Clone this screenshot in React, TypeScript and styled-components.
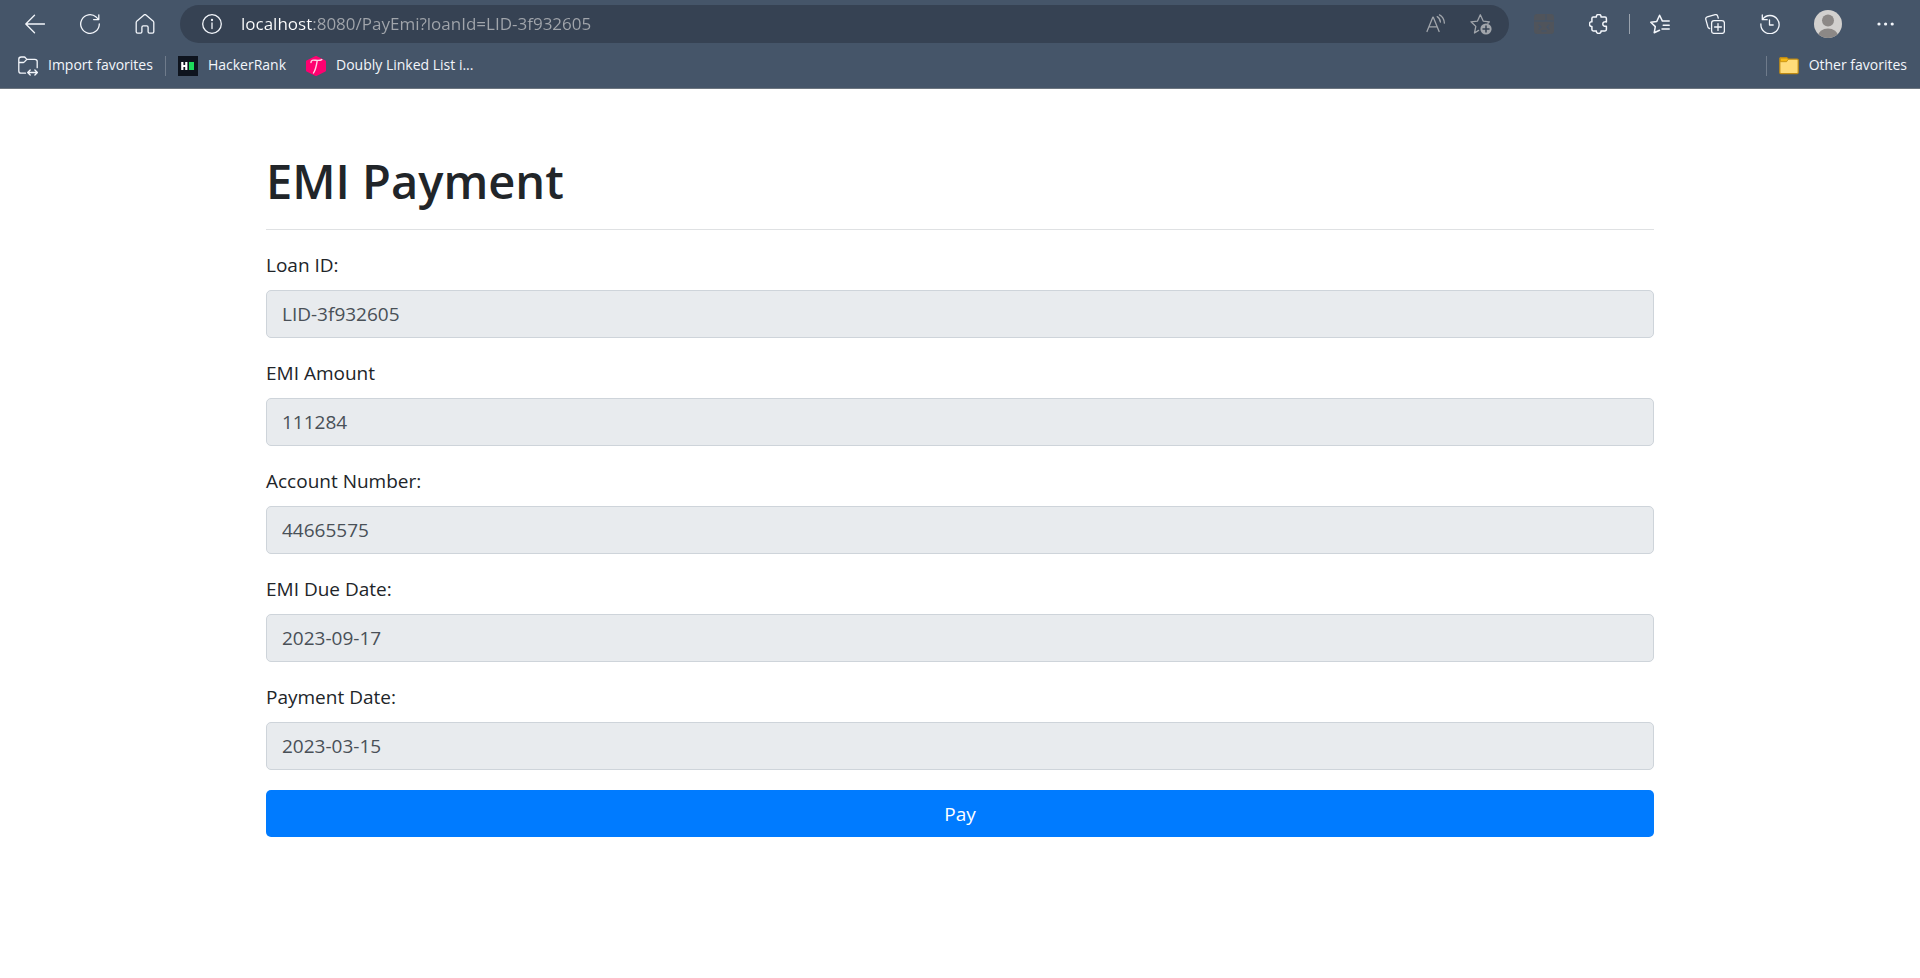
import React from 'react';
import styled, { createGlobalStyle } from 'styled-components';

const GlobalStyle = createGlobalStyle`
  *, *::before, *::after { box-sizing: border-box; }
  body {
    margin: 0;
    background: #ffffff;
    color: #212529;
    font-family: "Segoe UI", "Open Sans", "Noto Sans", sans-serif;
    font-size: 19px;
    line-height: 30px;
  }
  button, input { font-family: inherit; margin: 0; }
`;

const BrowserHeader = styled.header`
  background: #455569;
  border-bottom: 1px solid #6c757f;
  color: #f3f6fb;
`;

const Toolbar = styled.div`
  display: flex;
  align-items: center;
  gap: 15px;
  height: 48px;
  padding: 0 14px 0 15px;
`;

const ToolButton = styled.button<{ $wide?: boolean }>`
  display: flex;
  align-items: center;
  justify-content: center;
  flex: none;
  width: ${(p) => (p.$wide ? 46 : 40)}px;
  height: 36px;
  padding: 0;
  border: 0;
  background: transparent;
  color: inherit;
`;

const ToolGroup = styled.div`
  display: flex;
  align-items: center;
  gap: 15px;
`;

const Divider = styled.span<{ $spaced?: boolean }>`
  flex: none;
  width: 1px;
  height: 20px;
  margin: ${(p) => (p.$spaced ? '0 -5px' : '0')};
  background: ${(p) => (p.$spaced ? '#9aa3ae' : '#6f7b8b')};
`;

const AddressBar = styled.div`
  display: flex;
  align-items: center;
  flex: 1;
  height: 38px;
  padding: 0 8px 0 12px;
  border-radius: 19px;
  background: #364253;
`;

const AddressInput = styled.input`
  flex: 1;
  min-width: 0;
  height: 30px;
  padding: 0 0 2px;
  margin-left: 9px;
  border: 0;
  outline: 0;
  font-size: 17px;
  line-height: 24px;
  color: #ffffff;
  background: linear-gradient(90deg, #ffffff 72px, #a1a5ab 72px);
  background-clip: text;
  -webkit-text-fill-color: transparent;
`;

const AddressActions = styled.div`
  display: flex;
  align-items: center;
  gap: 5px;
  color: #a1a5ab;
`;

const FavoritesBar = styled.nav`
  display: flex;
  align-items: center;
  height: 40px;
  padding: 0 13px 4px 18px;
  gap: 12px;
`;

const Favorite = styled.a`
  display: flex;
  align-items: center;
  gap: 10px;
  margin-right: 8px;
  color: inherit;
  font-size: 14px;
  line-height: 20px;
  text-decoration: none;
  white-space: nowrap;
  &:first-child, &:last-child { margin-right: 0; }
`;

const FavoriteText = styled.span`
  padding-bottom: 2px;
`;

const Spacer = styled.span`
  flex: 1;
`;

const Page = styled.main`
  width: 100%;
  max-width: 1426px;
  margin: 0 auto;
  padding: 62px 19px;
`;

const Title = styled.h1`
  margin: 0;
  font-size: 47px;
  line-height: 60px;
  font-weight: 600;
`;

const Rule = styled.hr`
  margin: 18px 0 20px;
  border: 0;
  border-top: 1px solid #dfe1e3;
`;

const Form = styled.form`
  display: flex;
  flex-direction: column;
  gap: 20px;
`;

const Field = styled.div`
  display: flex;
  flex-direction: column;
  gap: 10px;
`;

const Label = styled.label`
  line-height: 30px;
`;

const TextInput = styled.input`
  width: 100%;
  height: 48px;
  padding: 8px 15px;
  border: 1px solid #ced4da;
  border-radius: 5px;
  background: #e8ebee;
  color: #495057;
  font-size: 19px;
  line-height: 30px;
  outline: 0;
`;

const PayButton = styled.button`
  height: 47px;
  border: 0;
  border-radius: 5px;
  background: #007bff;
  color: #ffffff;
  font-size: 19px;
  line-height: 30px;
`;

const Icon = ({ children, size = 20, width = 1.3 }: { children: React.ReactNode; size?: number; width?: number }) => (
  <svg
    width={size}
    height={size}
    viewBox={`0 0 ${size} ${size}`}
    fill="none"
    stroke="currentColor"
    strokeWidth={width}
    strokeLinecap="round"
    strokeLinejoin="round"
    aria-hidden="true"
  >
    {children}
  </svg>
);

const BackIcon = () => <Icon><path d="M9.5 1.3 .8 10l8.7 8.7M1 10h18.6" /></Icon>;
const ReloadIcon = () => <Icon><path d="M19.3 10A9.3 9.3 0 1 1 16.2 3.1L18.6 5.4M18.8.8v4.8H13.6" /></Icon>;
const HomeIcon = () => (
  <Icon>
    <path d="M1.2 8.6c0-.7.3-1.2.8-1.7L9 .9c.6-.5 1.4-.5 2 0l7 6c.5.5.8 1 .8 1.7v9.2c0 .9-.5 1.4-1.4 1.4h-2.9c-.9 0-1.4-.5-1.4-1.4v-4.5c0-.9-.5-1.4-1.4-1.4H8.3c-.9 0-1.4.5-1.4 1.4v4.5c0 .9-.5 1.4-1.4 1.4H2.600c-.9 0-1.400-.5-1.400-1.400z" />
  </Icon>
);
const InfoIcon = () => (
  <Icon>
    <circle cx="10" cy="10" r="9.3" />
    <path d="M10 9v5.500" />
    <circle cx="10" cy="6" r=".5" fill="currentColor" />
  </Icon>
);
const ReadAloudIcon = () => (
  <Icon>
    <path d="M1 17.500 6.800 3.200h.5l5.800 14.300M3 12.800h8.200M11.200 2.600c2 1.200 3 3 3.200 5.400M13.500.9c2.900 1.600 4.600 4.200 4.900 8.200" />
  </Icon>
);
const AddFavoriteIcon = () => (
  <Icon size={22}>
    <path d="M8.600 17.400 4.500 20l1.300-6.600L1 8.800l6.500-.7L10.300 1.800l2.900 6.300 6.200.7-1.500 1.500" />
    <circle cx="16" cy="16" r="5.600" fill="currentColor" stroke="none" />
    <path d="M16 13v6M13 16h6" stroke="#364253" strokeWidth="1.500" />
  </Icon>
);
const ExtensionIcon = () => (
  <Icon>
    <rect x="0" y="0" width="20" height="20" rx="3" fill="#50545b" stroke="none" />
    <path d="M1 7h11M12 1v6h7M5 11l2 2-2 2M15 11l-2 2 2 2M8 17h4" stroke="#465467" />
  </Icon>
);
const PuzzleIcon = () => (
  <Icon width={1.5}>
    <path d="M4.300 3h3.100c-.2-1.600.8-2.600 2.300-2.600S12.200 1.400 12 3h4c.9 0 1.400.5 1.400 1.400v3.500c-2.300-.4-3.600.5-3.600 2.200s1.300 2.500 3.600 2.200v3.300c0 .9-.5 1.400-1.400 1.400H12c.2 1.600-.8 2.500-2.300 2.500S7.200 18.600 7.400 17H4.300c-.9 0-1.400-.5-1.400-1.400v-3.200C1.300 12.600.5 11.600.5 10.100s.8-2.500 2.400-2.300V4.400C2.900 3.500 3.400 3 4.300 3z" />
  </Icon>
);
const FavoritesIcon = () => (
  <Icon width={1.5}>
    <path d="M9.500 16.300 4.200 18.800l1.100-6.200L.8 8.200l6-.8L9.600 1.200l2.800 5.900h6.800M13.200 11.200h6M12 15h7.200" />
  </Icon>
);
const CollectionsIcon = () => (
  <Icon>
    <rect x="6.600" y="6.600" width="12.800" height="12.800" rx="2.500" />
    <path d="M13 9.600v6.800M9.600 13h6.800M4.600 14.500c-1-.2-1.500-.8-1.800-1.800L.8 5.300C.5 4 1 3.200 2.200 2.800l8-2.100c1.300-.3 2.100.2 2.500 1.400l.6 2.100" />
  </Icon>
);
const HistoryIcon = () => (
  <Icon>
    <path d="M2.300 1v4.700h4.900M2.500 5.400A9.100 9.100 0 1 1 .9 10M9.500 5.800V11h3.700" />
  </Icon>
);
const AvatarIcon = () => (
  <svg width="28" height="28" viewBox="0 0 28 28" aria-hidden="true">
    <defs>
      <clipPath id="avatarClip"><circle cx="14" cy="14" r="14" /></clipPath>
    </defs>
    <g clipPath="url(#avatarClip)">
      <rect width="28" height="28" fill="#d2d0ce" />
      <circle cx="14" cy="10.500" r="6" fill="#8c8886" />
      <ellipse cx="14" cy="26" rx="10" ry="7.500" fill="#8c8886" />
    </g>
  </svg>
);
const MoreIcon = () => (
  <Icon>
    <g fill="currentColor" stroke="none">
      <circle cx="3" cy="10" r="1.600" /><circle cx="9.600" cy="10" r="1.600" /><circle cx="16.200" cy="10" r="1.600" />
    </g>
  </Icon>
);
const ImportIcon = () => (
  <Icon>
    <path d="M7.500 17.200H3.200C1.700 17.200.8 16.400.8 15V3.200C.8 1.800 1.700 1 3.200 1h3c1.400 0 1.700 2.300 3.200 2.300h7.400c1.500 0 2.400.8 2.400 2.200v6.200M.8 6.500h4.700c1.600 0 2.200-3.200 4-3.200M9.800 16.500h9.500M12.200 14l-2.500 2.500 2.500 2.500M16.900 14l2.500 2.500-2.500 2.500" />
  </Icon>
);
const HackerRankIcon = () => (
  <svg width="20" height="20" viewBox="0 0 20 20" aria-hidden="true">
    <rect width="20" height="20" fill="#0e141e" />
    <path d="M4.300 6v8M8.300 6v8M4.300 10h4" stroke="#fff" strokeWidth="2.200" />
    <rect x="11" y="6" width="5" height="8" fill="#1ddb5b" />
  </svg>
);
const TutorialIcon = () => (
  <svg width="20" height="20" viewBox="0 0 20 20" aria-hidden="true">
    <path d="M10 1 19 5.500v9L10 19 1 14.500v-9z" fill="#ff0070" stroke="#ff0070" strokeWidth="2" strokeLinejoin="round" />
    <path d="M5 6.500C5 4 7 4 9 4.200s5 .6 6.800-.6M11.200 4.500C10.500 9 10 13 7.500 17" fill="none" stroke="#ffd5e6" strokeWidth="1.400" strokeLinecap="round" />
  </svg>
);
const FolderIcon = () => (
  <svg width="20" height="20" viewBox="0 0 20 20" aria-hidden="true">
    <path d="M.8 2.500c0-.6.400-1 1-1h5.600c.8 0 1.300 1.300 2.100 1.600h8.700c.6 0 1 .4 1 1v12.500c0 .6-.4 1-1 1H1.800c-.6 0-1-.4-1-1z" fill="#ffdc7a" stroke="#bf8a13" strokeWidth="1.200" />
    <path d="M1.400 2.100h6.300l1.400 1.400L7.600 5.700H1.400z" fill="#f5b915" stroke="#bf8a13" strokeWidth=".8" />
  </svg>
);

const fields = [
  { id: 'loanId', label: 'Loan ID:', value: 'LID-3f932605' },
  { id: 'emiAmount', label: 'EMI Amount', value: '111284' },
  { id: 'accountNumber', label: 'Account Number:', value: '44665575' },
  { id: 'emiDueDate', label: 'EMI Due Date:', value: '2023-09-17' },
  { id: 'paymentDate', label: 'Payment Date:', value: '2023-03-15' },
];

export default function App() {
  return (
    <>
      <GlobalStyle />
      <BrowserHeader>
        <Toolbar>
          <ToolButton aria-label="Back"><BackIcon /></ToolButton>
          <ToolButton aria-label="Refresh"><ReloadIcon /></ToolButton>
          <ToolButton aria-label="Home"><HomeIcon /></ToolButton>
          <AddressBar>
            <ToolButton aria-label="Site information"><InfoIcon /></ToolButton>
            <AddressInput aria-label="Address" defaultValue="localhost:8080/PayEmi?loanId=LID-3f932605" />
            <AddressActions>
              <ToolButton aria-label="Read aloud"><ReadAloudIcon /></ToolButton>
              <ToolButton aria-label="Add to favorites"><AddFavoriteIcon /></ToolButton>
            </AddressActions>
          </AddressBar>
          <ToolGroup>
            <ToolButton aria-label="Extension"><ExtensionIcon /></ToolButton>
            <ToolButton aria-label="Extensions"><PuzzleIcon /></ToolButton>
            <Divider $spaced />
            <ToolButton aria-label="Favorites"><FavoritesIcon /></ToolButton>
            <ToolButton aria-label="Collections"><CollectionsIcon /></ToolButton>
            <ToolButton aria-label="History"><HistoryIcon /></ToolButton>
            <ToolButton $wide aria-label="Profile"><AvatarIcon /></ToolButton>
            <ToolButton aria-label="Settings and more"><MoreIcon /></ToolButton>
          </ToolGroup>
        </Toolbar>
        <FavoritesBar aria-label="Favorites">
          <Favorite href="#import"><ImportIcon /><FavoriteText>Import favorites</FavoriteText></Favorite>
          <Divider />
          <Favorite href="#hackerrank"><HackerRankIcon /><FavoriteText>HackerRank</FavoriteText></Favorite>
          <Favorite href="#linked-list"><TutorialIcon /><FavoriteText>Doubly Linked List i...</FavoriteText></Favorite>
          <Spacer />
          <Divider />
          <Favorite href="#other"><FolderIcon /><FavoriteText>Other favorites</FavoriteText></Favorite>
        </FavoritesBar>
      </BrowserHeader>
      <Page>
        <Title>EMI Payment</Title>
        <Rule />
        <Form onSubmit={(e) => e.preventDefault()}>
          {fields.map((f) => (
            <Field key={f.id}>
              <Label htmlFor={f.id}>{f.label}</Label>
              <TextInput id={f.id} name={f.id} type="text" defaultValue={f.value} readOnly />
            </Field>
          ))}
          <PayButton type="submit">Pay</PayButton>
        </Form>
      </Page>
    </>
  );
}
